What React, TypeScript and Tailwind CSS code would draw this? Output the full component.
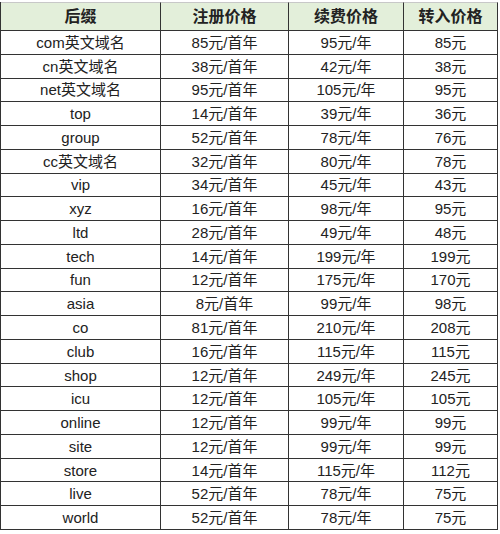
const ROWS: [string, string, string, string][] = [
  ['com英文域名', '85元/首年', '95元/年', '85元'],
  ['cn英文域名', '38元/首年', '42元/年', '38元'],
  ['net英文域名', '95元/首年', '105元/年', '95元'],
  ['top', '14元/首年', '39元/年', '36元'],
  ['group', '52元/首年', '78元/年', '76元'],
  ['cc英文域名', '32元/首年', '80元/年', '78元'],
  ['vip', '34元/首年', '45元/年', '43元'],
  ['xyz', '16元/首年', '98元/年', '95元'],
  ['ltd', '28元/首年', '49元/年', '48元'],
  ['tech', '14元/首年', '199元/年', '199元'],
  ['fun', '12元/首年', '175元/年', '170元'],
  ['asia', '8元/首年', '99元/年', '98元'],
  ['co', '81元/首年', '210元/年', '208元'],
  ['club', '16元/首年', '115元/年', '115元'],
  ['shop', '12元/首年', '249元/年', '245元'],
  ['icu', '12元/首年', '105元/年', '105元'],
  ['online', '12元/首年', '99元/年', '99元'],
  ['site', '12元/首年', '99元/年', '99元'],
  ['store', '14元/首年', '115元/年', '112元'],
  ['live', '52元/首年', '78元/年', '75元'],
  ['world', '52元/首年', '78元/年', '75元'],
]

const HEADERS = ['后缀', '注册价格', '续费价格', '转入价格']

export default function App() {
  return (
    <div
      className="w-[500px] h-[534px] bg-white pt-[2px] text-[#222]"
      style={{ fontFamily: '"Liberation Sans", "Noto Sans CJK SC", sans-serif' }}
    >
      <div className="w-[497px] h-[528px] grid grid-cols-[160px_128px_115px_94px] grid-rows-[29px_repeat(21,1fr)] border-l border-[#333]">
        {HEADERS.map((h) => (
          <div
            key={h}
            className="flex items-center justify-center bg-[#e3efda] border-t border-t-[#c8c8c8] border-r border-b border-[#333] text-[16px] font-bold"
          >
            {h}
          </div>
        ))}
        {ROWS.map((row) =>
          row.map((cell, i) => (
            <div
              key={row[0] + i}
              className="flex items-center justify-center border-r border-b border-[#333] text-[15px] leading-none"
            >
              {cell}
            </div>
          ))
        )}
      </div>
    </div>
  )
}
